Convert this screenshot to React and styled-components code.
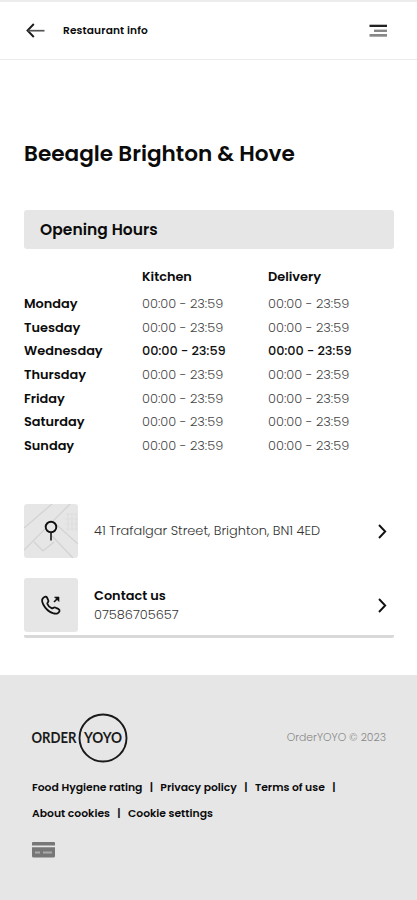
import React from "react";
import styled, { createGlobalStyle } from "styled-components";

const GlobalStyle = createGlobalStyle`
  * {
    box-sizing: border-box;
  }
  body {
    margin: 0;
    background: #fff;
    color: #0b0b0b;
    font-family: "Poppins", "Inter", "Liberation Sans", sans-serif;
  }
  h1, h2, p {
    margin: 0;
  }
`;

const Page = styled.div`
  display: flex;
  flex-direction: column;
  width: 417px;
  height: 900px;
  overflow: hidden;
`;

const Header = styled.header`
  display: flex;
  align-items: center;
  height: 60px;
  padding: 0 30px 0 25px;
  border-top: 2px solid #ececec;
  border-bottom: 1px solid #ebebeb;
`;

const HeaderTitle = styled.p`
  flex: 1;
  margin-left: 17px;
  font-size: 10.6px;
  line-height: 16px;
  font-weight: 600;
  letter-spacing: 0.14px;
`;

const Main = styled.main`
  flex: none;
  height: 615px;
  padding: 78px 23px 0 24px;
`;

const Title = styled.h1`
  font-size: 21.6px;
  line-height: 32px;
  font-weight: 600;
  white-space: nowrap;
`;

const SectionTitle = styled.h2`
  height: 39px;
  margin-top: 40px;
  padding-left: 16px;
  border-radius: 3px;
  background: #e6e6e6;
  font-size: 15.5px;
  line-height: 39px;
  font-weight: 600;
  letter-spacing: 0.05px;
`;

const Hours = styled.div`
  margin-top: 15.5px;
`;

const HoursRow = styled.div`
  display: grid;
  grid-template-columns: 118px 126px 1fr;
  height: ${(props) => (props.$head ? "27.5px" : "23.65px")};
  font-size: 12.9px;
  line-height: 24px;
`;

const Strong = styled.span`
  font-weight: 600;
`;

const Time = styled.span`
  color: ${(props) => (props.$today ? "#111" : "#444")};
  font-weight: ${(props) => (props.$today ? 500 : 300)};
  letter-spacing: ${(props) => (props.$today ? "-0.12px" : "0")};
`;

const Links = styled.div`
  display: flex;
  flex-direction: column;
  gap: 20px;
  margin-top: 46.5px;
  padding-bottom: 3px;
  border-bottom: 3px solid #d9d9d9;
  border-radius: 2px;
`;

const LinkRow = styled.div`
  display: flex;
  align-items: center;
  height: 54px;
  padding-right: 6px;
`;

const Tile = styled.div`
  width: 54px;
  height: 54px;
  margin-right: 16px;
  border-radius: 3px;
  background: #e6e6e6;
  overflow: hidden;
`;

const LinkText = styled.div`
  flex: 1;
  font-size: 12.9px;
  line-height: 19px;
`;

const Detail = styled.p`
  color: #333;
  font-weight: 300;
  white-space: nowrap;
`;

const Footer = styled.footer`
  flex: 1;
  padding: 38px 31px 0;
  background: #e6e6e6;
`;

const FooterTop = styled.div`
  display: flex;
  align-items: center;
  justify-content: space-between;
  height: 50px;
`;

const Copyright = styled.p`
  color: #888;
  font-size: 10.8px;
  font-weight: 300;
`;

const FooterLinks = styled.nav`
  display: flex;
  height: 26px;
  margin-top: ${(props) => (props.$first ? "12px" : "0")};
  padding-left: 1px;
  font-size: 10.8px;
  line-height: 26px;
  font-weight: 600;
  white-space: nowrap;
`;

const Divider = styled.span`
  width: 18px;
  text-align: center;
`;

const Card = styled.div`
  margin: 14px 0 0 1px;
  line-height: 0;
`;

const days = [
  "Monday",
  "Tuesday",
  "Wednesday",
  "Thursday",
  "Friday",
  "Saturday",
  "Sunday",
];

const today = "Wednesday";

const BackIcon = () => (
  <svg width="21" height="18" viewBox="0 0 21 18" fill="none">
    <path d="M8.8 2 2.5 8.500l6.300 6.500" stroke="#1a1a1a" strokeWidth="1.900" />
    <path d="M3 8.700h16.500" stroke="#555" strokeWidth="1.700" />
  </svg>
);

const MenuIcon = () => (
  <svg width="18" height="14" viewBox="0 0 18 14">
    <rect x="0.500" y="0.700" width="17.500" height="2.300" fill="#222" />
    <rect x="5" y="5.600" width="13" height="2.400" fill="#888" />
    <rect x="0.500" y="10" width="17.500" height="2.700" fill="#888" />
  </svg>
);

const ChevronIcon = () => (
  <svg width="12" height="18" viewBox="0 0 12 18" fill="none">
    <path d="m3 3 6.200 6.500L3 16" stroke="#111" strokeWidth="1.900" />
  </svg>
);

const MapIcon = () => (
  <svg width="54" height="54" viewBox="0 0 54 54" fill="none">
    <g stroke="#d2d2d2" strokeWidth="1.200">
      <path d="M0 24 28 0M0 46 46 0M10 38l9 9 11-9M34 22l20 18M28 32l21 22" />
      <path
        d="M42 10h11M41 15h13M41 20h13M42 25h12M44 9v18M48 9v18M52 9v18"
        stroke="#dedede"
      />
    </g>
    <circle cx="27" cy="23" r="5.300" fill="#e6e6e6" stroke="#111" strokeWidth="1.900" />
    <path d="M27 28.500v8" stroke="#222" strokeWidth="1.700" />
  </svg>
);

const PhoneIcon = () => (
  <svg width="54" height="54" viewBox="0 0 54 54" fill="none" stroke="#111">
    <path
      d="M20 19.200c-2.500 1.400-2.400 4-.7 7.300 2.200 4.300 5.500 7.200 9.600 8.700 3 1 5.800.5 6.600-2 .3-1-.3-1.800-1.300-2.300l-3-1.400c-1.500-.6-2.300 1.200-3.600.7-2-.8-3.600-2.500-4.300-4.400-.3-1.200 1.500-1.700 1.100-3.100l-1.200-2.900c-.6-1.200-1.900-1.400-3.200-.6Z"
      strokeWidth="1.800"
    />
    <path d="m30 24 4.500-4.500" strokeWidth="1.600" />
    <path d="M30.500 19h4.500v4.500Z" fill="#111" strokeWidth="0.600" />
  </svg>
);

const Logo = () => (
  <svg width="98" height="50" viewBox="0 0 98 50" fill="none">
    <circle cx="72" cy="25" r="23.500" stroke="#1a1a1a" strokeWidth="1.900" />
    <g
      fill="#1a1a1a"
      fontFamily="Lato, sans-serif"
      fontSize="14.800"
      fontWeight="700"
    >
      <text x="0.500" y="30.200" textLength="45" lengthAdjust="spacingAndGlyphs">
        ORDER
      </text>
      <text x="53" y="30.200" textLength="38" lengthAdjust="spacingAndGlyphs">
        YOYO
      </text>
    </g>
  </svg>
);

const CardIcon = () => (
  <svg width="23" height="17" viewBox="0 0 23 17">
    <path d="M0 4.500V2Q0 1 1 1h21q1 0 1 1v2.500Z" fill="#777" />
    <path d="M0 6.300h23V15q0 1.500-1.500 1.500h-20Q0 16.500 0 15Z" fill="#777" />
    <path d="M3 11.500h5M11 11.500h9" stroke="#aaa" strokeWidth="2" />
  </svg>
);

const App = () => {
  return (
    <Page>
      <GlobalStyle />
      <Header>
        <BackIcon />
        <HeaderTitle>Restaurant info</HeaderTitle>
        <MenuIcon />
      </Header>
      <Main>
        <Title>Beeagle Brighton &amp; Hove</Title>
        <SectionTitle>Opening Hours</SectionTitle>
        <Hours>
          <HoursRow $head>
            <span />
            <Strong>Kitchen</Strong>
            <Strong>Delivery</Strong>
          </HoursRow>
          {days.map((day) => (
            <HoursRow key={day}>
              <Strong>{day}</Strong>
              <Time $today={day === today}>00:00 - 23:59</Time>
              <Time $today={day === today}>00:00 - 23:59</Time>
            </HoursRow>
          ))}
        </Hours>
        <Links>
          <LinkRow>
            <Tile>
              <MapIcon />
            </Tile>
            <LinkText>
              <Detail>41 Trafalgar Street, Brighton, BN1 4ED</Detail>
            </LinkText>
            <ChevronIcon />
          </LinkRow>
          <LinkRow>
            <Tile>
              <PhoneIcon />
            </Tile>
            <LinkText>
              <Strong>Contact us</Strong>
              <Detail>07586705657</Detail>
            </LinkText>
            <ChevronIcon />
          </LinkRow>
        </Links>
      </Main>
      <Footer>
        <FooterTop>
          <Logo />
          <Copyright>OrderYOYO © 2023</Copyright>
        </FooterTop>
        <FooterLinks $first>
          <span>Food Hygiene rating</span>
          <Divider>|</Divider>
          <span>Privacy policy</span>
          <Divider>|</Divider>
          <span>Terms of use</span>
          <Divider>|</Divider>
        </FooterLinks>
        <FooterLinks>
          <span>About cookies</span>
          <Divider>|</Divider>
          <span>Cookie settings</span>
        </FooterLinks>
        <Card>
          <CardIcon />
        </Card>
      </Footer>
    </Page>
  );
};

export default App;
